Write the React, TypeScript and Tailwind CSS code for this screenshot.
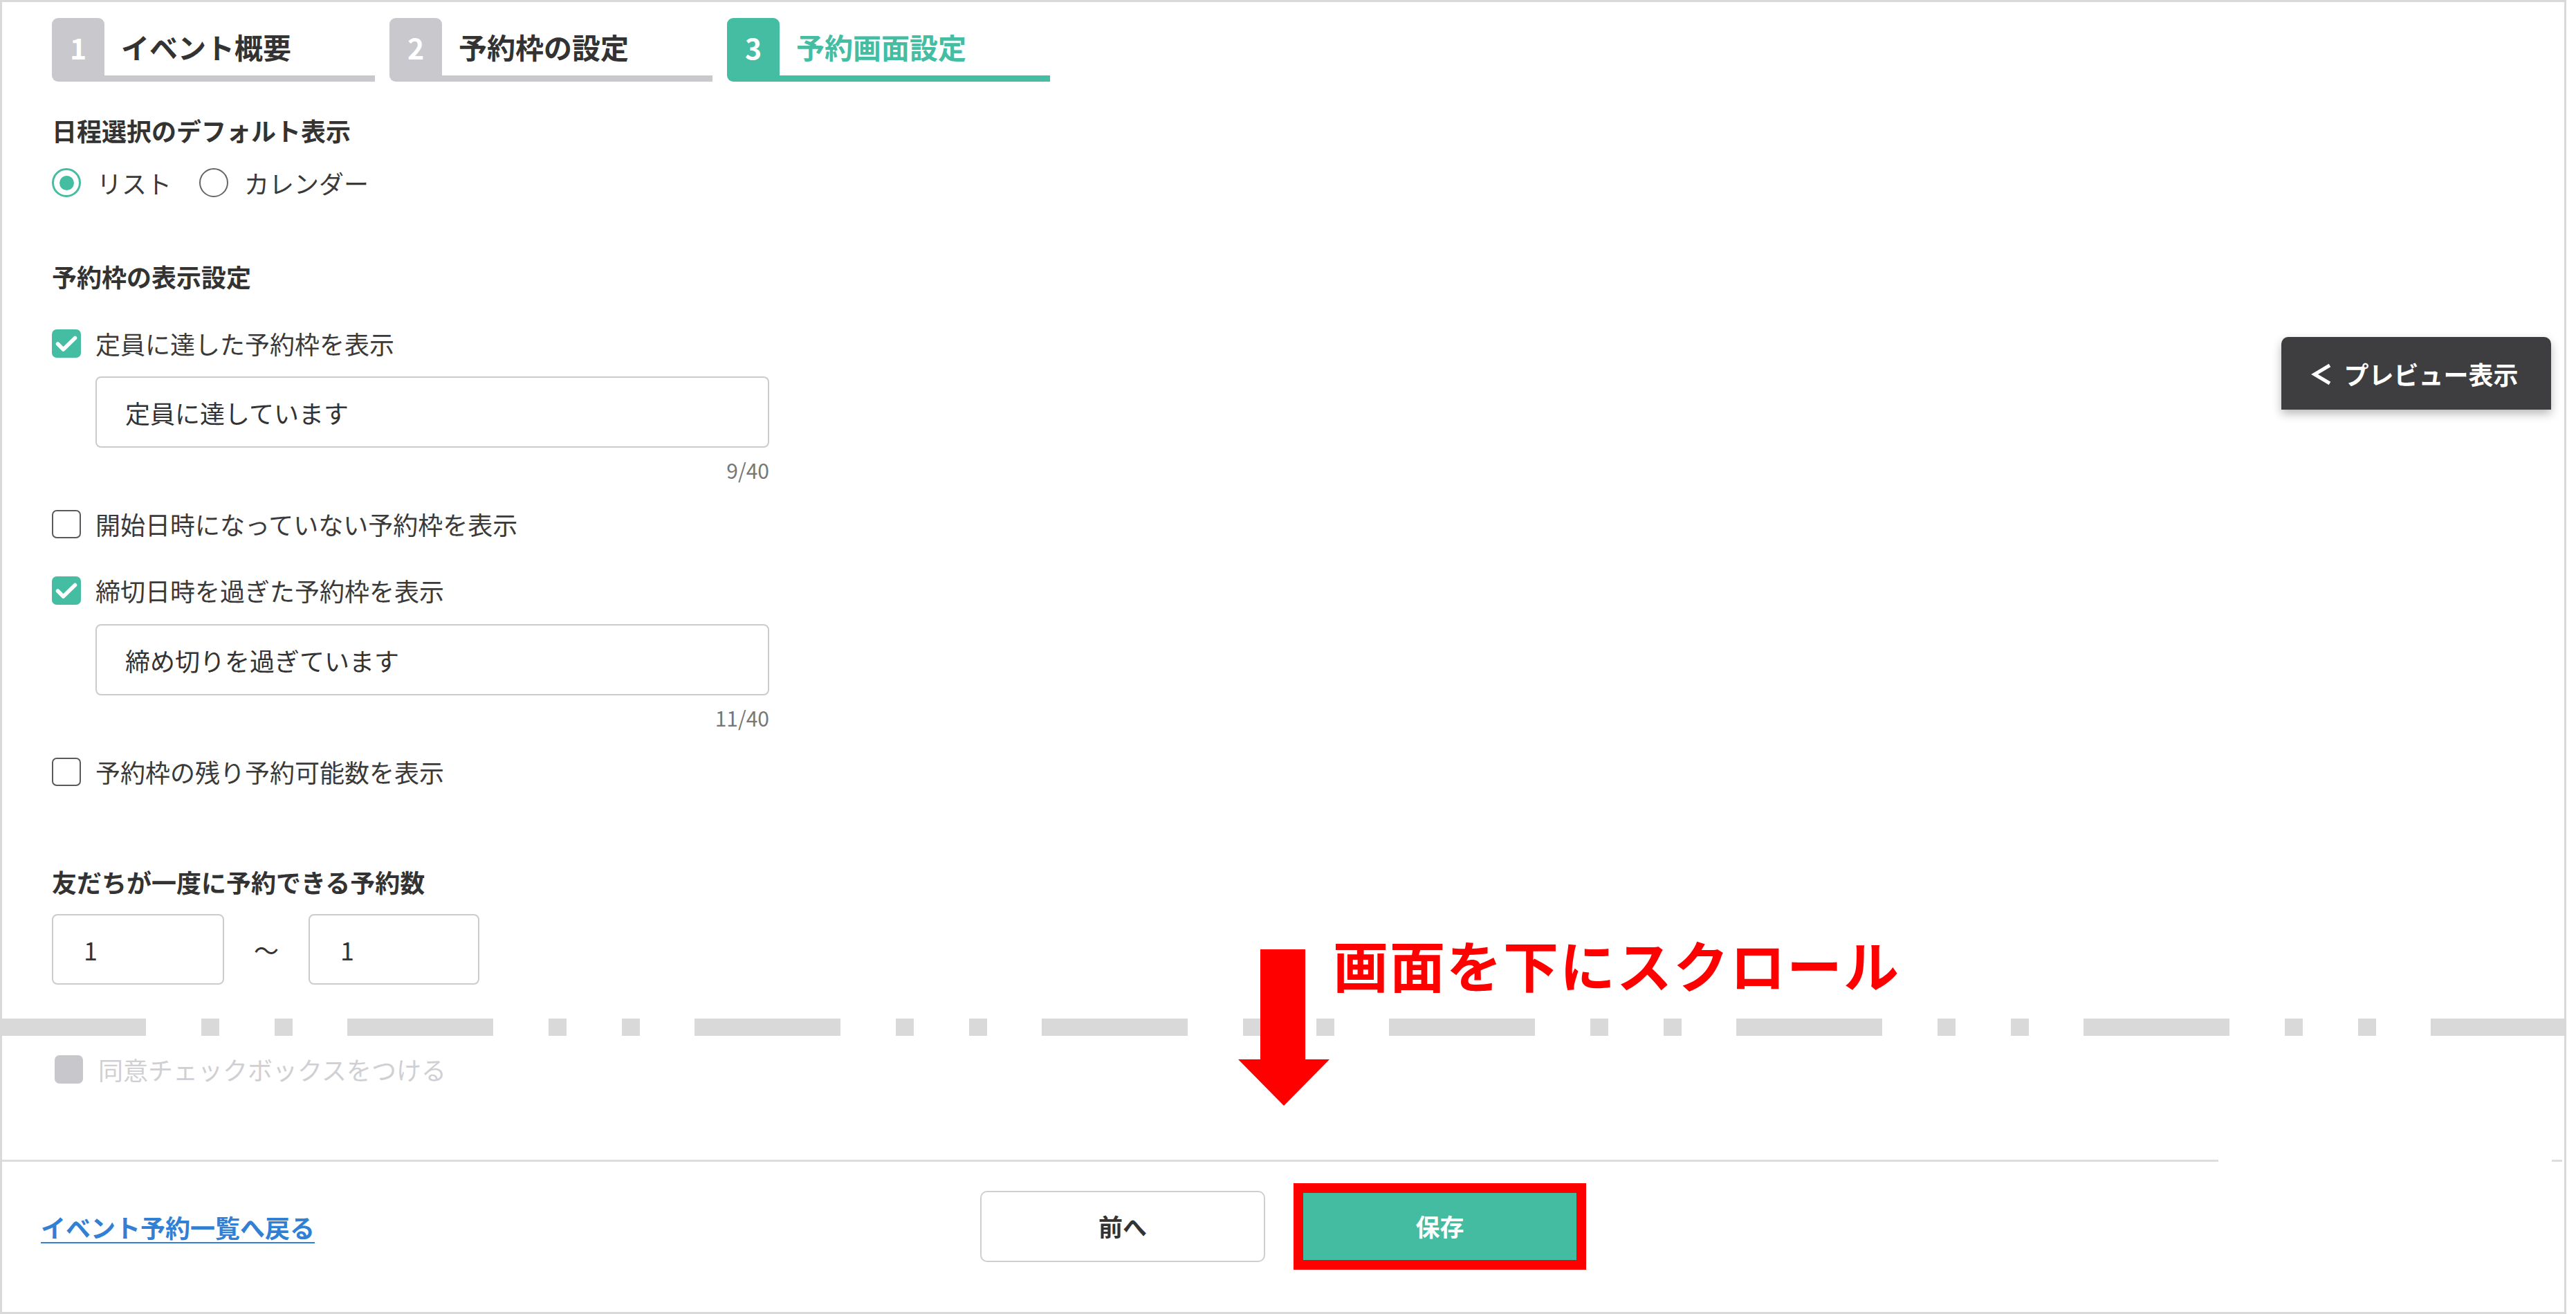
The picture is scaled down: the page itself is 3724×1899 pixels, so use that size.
import React from "react";

function Step({ num, label, active }: { num: string; label: string; active?: boolean }) {
  return (
    <div className="flex h-[92px] w-[467px]">
      <div
        className={`flex w-[76px] items-center justify-center rounded-t-[9px] rounded-bl-[9px] pb-[6px] text-[41px] font-bold text-white ${
          active ? "bg-[#45bda2]" : "bg-[#c8c8cd]"
        }`}
      >
        {num}
      </div>
      <div
        className={`flex flex-1 items-center border-b-[9px] pl-[24px] text-[41px] font-bold ${
          active ? "border-[#45bda2] text-[#45bda2]" : "border-[#c8c8cd] text-[#333333]"
        }`}
      >
        {label}
      </div>
    </div>
  );
}

function Radio({ checked, label }: { checked?: boolean; label: string }) {
  return (
    <label className="flex items-center gap-[23px]">
      {checked ? (
        <span className="flex h-[42px] w-[42px] items-center justify-center rounded-full border-[3px] border-[#45bda2]">
          <span className="h-[21px] w-[21px] rounded-full bg-[#45bda2]" />
        </span>
      ) : (
        <span className="h-[42px] w-[42px] rounded-full border-2 border-[#666666]" />
      )}
      <span className="text-[36px] text-[#3a3a3a]">{label}</span>
    </label>
  );
}

function CheckRow({ checked, label, className = "" }: { checked?: boolean; label: string; className?: string }) {
  return (
    <div className={`flex h-[54px] items-center gap-[21px] ${className}`}>
      {checked ? (
        <span className="flex h-[41px] w-[42px] items-center justify-center rounded-[7px] bg-[#45bda2]">
          <svg viewBox="0 0 42 41" className="h-[41px] w-[42px]">
            <path
              d="M8.5 21 L16.5 29 L33.5 12.5"
              fill="none"
              stroke="#fff"
              strokeWidth="5.5"
              strokeLinecap="round"
              strokeLinejoin="round"
            />
          </svg>
        </span>
      ) : (
        <span className="h-[41px] w-[42px] rounded-[7px] border-2 border-[#5a5a5a] bg-white" />
      )}
      <span className="text-[36px] leading-[54px] text-[#3a3a3a]">{label}</span>
    </div>
  );
}

function TextBox({ value, count, className = "" }: { value: string; count: string; className?: string }) {
  return (
    <div className={`ml-[63px] w-[974px] ${className}`}>
      <div className="flex h-[103px] items-center rounded-[8px] border-2 border-[#cccccc] pl-[41px] text-[36px] text-[#333333]">
        {value}
      </div>
      <div className="mt-[12px] text-right text-[30px] leading-[40px] text-[#777777]">{count}</div>
    </div>
  );
}

export default function App() {
  return (
    <div className="h-[1899px] w-[3724px] bg-white font-['Noto_Sans_CJK_JP','Noto_Sans',sans-serif]">
      <div className="relative flex h-[1899px] w-[3710px] flex-col border-[3px] border-[#d9d9d9] bg-white">
        {/* form body */}
        <div className="flex-1 pl-[72px]">
          <div className="mt-[23px] flex gap-[21px]">
            <Step num="1" label="イベント概要" />
            <Step num="2" label="予約枠の設定" />
            <Step num="3" label="予約画面設定" active />
          </div>

          <h2 className="mt-[43px] text-[36px] font-bold leading-[54px] text-[#333333]">日程選択のデフォルト表示</h2>
          <div className="mt-[22px] flex h-[54px] items-center gap-[40px]">
            <Radio checked label="リスト" />
            <Radio label="カレンダー" />
          </div>

          <h2 className="mt-[81px] text-[36px] font-bold leading-[54px] text-[#333333]">予約枠の表示設定</h2>
          <CheckRow checked label="定員に達した予約枠を表示" className="mt-[43px]" />
          <TextBox value="定員に達しています" count="9/40" className="mt-[21px]" />
          <CheckRow label="開始日時になっていない予約枠を表示" className="mt-[31px]" />
          <CheckRow checked label="締切日時を過ぎた予約枠を表示" className="mt-[42px]" />
          <TextBox value="締め切りを過ぎています" count="11/40" className="mt-[22px]" />
          <CheckRow label="予約枠の残り予約可能数を表示" className="mt-[31px]" />

          <h2 className="mt-[105px] text-[36px] font-bold leading-[54px] text-[#333333]">友だちが一度に予約できる予約数</h2>
          <div className="mt-[20px] flex items-center">
            <div className="flex h-[102px] w-[249px] items-center rounded-[8px] border-2 border-[#cccccc] pl-[44px] text-[36px] text-[#333333]">
              1
            </div>
            <div className="flex w-[122px] justify-center text-[36px] text-[#333333]">〜</div>
            <div className="flex h-[102px] w-[247px] items-center rounded-[8px] border-2 border-[#cccccc] pl-[44px] text-[36px] text-[#333333]">
              1
            </div>
          </div>

          {/* cut marker */}
          <div className="-ml-[75px] mt-[49px] h-[25px] w-[3710px]">
            <svg width="3710" height="25" className="block">
              <line x1="0" y1="12.5" x2="3710" y2="12.5" stroke="#d9d9d9" strokeWidth="25" strokeDasharray="211 80 26 80 26 79" />
            </svg>
          </div>

          <div className="ml-[4px] mt-[21px] flex h-[54px] items-center gap-[22px]">
            <span className="h-[41px] w-[41px] rounded-[7px] bg-[#c8c8cc]" />
            <span className="text-[36px] text-[#d0d0d4]">同意チェックボックスをつける</span>
          </div>
        </div>

        {/* footer */}
        <div className="flex h-[3px]">
          <div className="w-[3204px] bg-[#dddddd]" />
          <div className="flex-1" />
          <div className="mr-[3px] w-[15px] bg-[#dddddd]" />
        </div>
        <div className="grid h-[217px] grid-cols-[1fr_auto_1fr] items-start pt-[31px]">
          <div className="flex h-[125px] items-center pl-[56px]">
            <a className="text-[36px] font-bold text-[#3180d4] underline decoration-2 underline-offset-[6px]">
              イベント予約一覧へ戻る
            </a>
          </div>
          <div className="flex h-[125px] items-center gap-[41px]">
            <button className="flex h-[103px] w-[412px] items-center justify-center rounded-[10px] border-2 border-[#cfcfd3] bg-white text-[35px] font-bold text-[#333333]">
              前へ
            </button>
            <div className="h-[125px] w-[423px] border-[14px] border-[#ff0000]">
              <button className="flex h-full w-full items-center justify-center bg-[#43bca1] text-[35px] font-bold text-white">
                保存
              </button>
            </div>
          </div>
          <div />
        </div>

        {/* preview tab floating on the right */}
        <button className="absolute left-[3295px] top-[484px] flex h-[105px] w-[390px] items-center justify-center gap-[17px] rounded-t-[10px] bg-[#3e3e40] pr-[4px] text-[36px] font-bold text-white shadow-[0_6px_14px_rgba(0,0,0,0.28)]">
          <svg width="30" height="32" viewBox="0 0 30 32" className="mt-[3px]">
            <polyline points="27,3 5,16 27,29" fill="none" stroke="#fff" strokeWidth="5" strokeLinejoin="miter" />
          </svg>
          <span>プレビュー表示</span>
        </button>

        {/* annotation arrow + caption */}
        <svg className="absolute left-[1787px] top-[1369px]" width="132" height="226" viewBox="0 0 132 226">
          <path d="M32 0 H97 V159 H132 L66 226 L0 159 H32 Z" fill="#ff0000" />
        </svg>
        <div className="absolute left-[1924px] top-[1349px] text-[80px] font-bold leading-[80px] tracking-[2px] text-[#ff0000]">
          画面を下にスクロール
        </div>
      </div>
    </div>
  );
}
